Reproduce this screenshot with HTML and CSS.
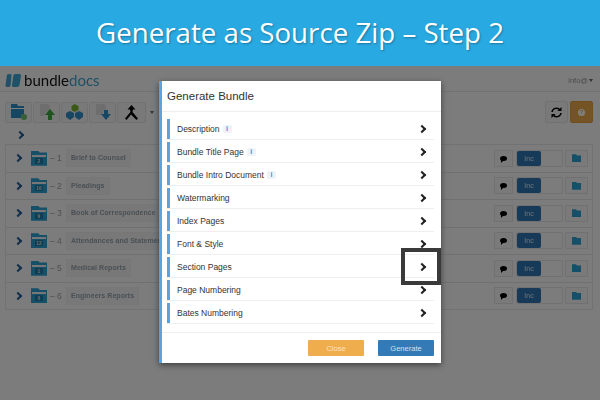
FILE: index.html
```html
<!DOCTYPE html>
<html lang="en">
<head>
    <meta charset="UTF-8">
    <title>Generate as Source Zip - Step 2</title>
    <link rel="stylesheet" href="styles.css">
</head>
<body>

    <!-- Banner -->
    <header class="banner">Generate as Source Zip – Step 2</header>

    <!-- App behind the modal -->
    <main class="app">
        <div class="topbar">
            <div class="logo">
                <svg class="logo-mark" width="16" height="13" viewBox="0 0 16 13"><path d="M2 .5Q3 0 5 0 6.500 0 6.500 1L5.500 11.500Q5 13 3 13 0 13 .5 11zM8.500 1Q9 0 11 0h3.500Q16 0 16 1.500L14.500 11Q14 13 12 13H8.500Q6.500 13 7 11z" fill="#3aa4d0"/></svg>
                <span>bundle</span><span class="logo-docs">docs</span>
            </div>
            <div class="user">info@<i class="caret"></i></div>
        </div>

        <div class="toolbar">
            <button class="tool">
                <svg width="16" height="16" viewBox="0 0 16 16"><path d="M0 0h6l1 2h6v8a4 4 0 0 0-3 4H0z" fill="#2a8fc4"/><path d="M0 4h13v1H0z" fill="#fff"/><circle cx="13" cy="13" r="3" fill="#6cbf6c"/></svg>
            </button>
            <button class="tool">
                <svg width="16" height="17" viewBox="0 0 16 17"><path d="M1 0h8l2 2v5H8l-3 5H1z" fill="#ddd"/><path d="M11 5l5 6h-3v5H9v-5H6z" fill="#3fa63f"/></svg>
            </button>
            <button class="tool">
                <svg width="17" height="16" viewBox="0 0 17 16"><path d="M8.500 0l4 2v4l-4 2-3-2V2z" fill="#76b032"/><path d="M4 7l4 2v4l-4 3-4-3V9z" fill="#2f8fc6"/><path d="M13 7l4 2v4l-4 3-4-3V9z" fill="#2f8fc6"/></svg>
            </button>
            <button class="tool">
                <svg width="16" height="17" viewBox="0 0 16 17"><path d="M1 0h8l2 2v5H8v4H1z" fill="#ddd"/><path d="M11 16L6 10h3V6h4v4h3z" fill="#2f8fc6"/></svg>
            </button>
            <button class="tool wide">
                <svg width="15" height="15" viewBox="0 0 15 15"><path d="M7.500 0l4 4.500H9L8.500 7l5.500 6.500-1.500 1.500L7 9.500 2.500 15 1 13.500 6.500 7 6 4.500H3.500z" fill="#000"/></svg>
            </button>
            <i class="caret tool-caret"></i>
            <div class="toolbar-right">
                <button class="tool square">
                    <svg width="11" height="11" viewBox="0 0 11 11"><path d="M1 5a4.500 4.500 0 0 1 8-2M10 6a4.500 4.500 0 0 1-8 2" fill="none" stroke="#000" stroke-width="1.500"/><path d="M10.500 0v4h-4zM.5 11V7h4z" fill="#000"/></svg>
                </button>
                <button class="tool square help"><span class="help-dot">?</span></button>
            </div>
        </div>

        <div class="root-arrow"><span class="chev chev-blue"></span></div>

        <section class="sections">
            <div class="section">
                <span class="chev chev-blue"></span>
                <span class="folder"><b>2</b></span>
                <span class="num">– 1</span>
                <span class="label">Brief to Counsel</span>
                <div class="actions">
                    <button class="act"><i class="bubble"></i></button>
                    <div class="toggle"><span class="inc">Inc</span></div>
                    <button class="act act-folder"><i class="mini-folder"></i></button>
                </div>
            </div>
            <div class="section">
                <span class="chev chev-blue"></span>
                <span class="folder"><b>16</b></span>
                <span class="num">– 2</span>
                <span class="label">Pleadings</span>
                <div class="actions">
                    <button class="act"><i class="bubble"></i></button>
                    <div class="toggle"><span class="inc">Inc</span></div>
                    <button class="act act-folder"><i class="mini-folder"></i></button>
                </div>
            </div>
            <div class="section">
                <span class="chev chev-blue"></span>
                <span class="folder"><b>9</b></span>
                <span class="num">– 3</span>
                <span class="label">Book of Correspondence</span>
                <div class="actions">
                    <button class="act"><i class="bubble"></i></button>
                    <div class="toggle"><span class="inc">Inc</span></div>
                    <button class="act act-folder"><i class="mini-folder"></i></button>
                </div>
            </div>
            <div class="section">
                <span class="chev chev-blue"></span>
                <span class="folder"><b>12</b></span>
                <span class="num">– 4</span>
                <span class="label">Attendances and Statements</span>
                <div class="actions">
                    <button class="act"><i class="bubble"></i></button>
                    <div class="toggle"><span class="inc">Inc</span></div>
                    <button class="act act-folder"><i class="mini-folder"></i></button>
                </div>
            </div>
            <div class="section">
                <span class="chev chev-blue"></span>
                <span class="folder"><b>1</b></span>
                <span class="num">– 5</span>
                <span class="label">Medical Reports</span>
                <div class="actions">
                    <button class="act"><i class="bubble"></i></button>
                    <div class="toggle"><span class="inc">Inc</span></div>
                    <button class="act act-folder"><i class="mini-folder"></i></button>
                </div>
            </div>
            <div class="section">
                <span class="chev chev-blue"></span>
                <span class="folder"><b>6</b></span>
                <span class="num">– 6</span>
                <span class="label">Engineers Reports</span>
                <div class="actions">
                    <button class="act"><i class="bubble"></i></button>
                    <div class="toggle"><span class="inc">Inc</span></div>
                    <button class="act act-folder"><i class="mini-folder"></i></button>
                </div>
            </div>
        </section>
    </main>

    <!-- Modal -->
    <div class="overlay"></div>
    <div class="modal">
        <h3 class="modal-title">Generate Bundle</h3>
        <div class="modal-body">
            <div class="option"><span>Description</span><i class="info">i</i><span class="chev"></span></div>
            <div class="option"><span>Bundle Title Page</span><i class="info">i</i><span class="chev"></span></div>
            <div class="option"><span>Bundle Intro Document</span><i class="info">i</i><span class="chev"></span></div>
            <div class="option"><span>Watermarking</span><span class="chev"></span></div>
            <div class="option"><span>Index Pages</span><span class="chev"></span></div>
            <div class="option"><span>Font &amp; Style</span><span class="chev"></span></div>
            <div class="option"><span>Section Pages</span><span class="chev"></span></div>
            <div class="option"><span>Page Numbering</span><span class="chev"></span></div>
            <div class="option"><span>Bates Numbering</span><span class="chev"></span></div>
        </div>
        <div class="modal-footer">
            <button class="btn btn-close">Close</button>
            <button class="btn btn-generate">Generate</button>
        </div>
    </div>

    <!-- Callout round the Section Pages arrow -->
    <div class="callout"></div>

</body>
</html>
```

FILE: styles.css
```css
/* Page */
body {
    font-family: 'Liberation Sans', Arial, sans-serif;
    margin: 0;
    width: 600px;
    height: 400px;
    position: relative;
    overflow: hidden;
    background: #fff;
}

/* Banner */
.banner {
    height: 66px;
    background: #29a9e1;
    color: #fff;
    font-family: 'Open Sans', sans-serif;
    font-size: 27.700px;
    line-height: 64px;
    text-align: center;
    text-shadow: 1px 1px 2px rgba(0, 0, 0, 0.3);
    position: relative;
    z-index: 3;
}

/* App behind the modal */
.app {
    padding: 0 7px 0 5px;
    height: 334px;
    background: #f8f8f8;
    filter: blur(0.4px);
}

.topbar {
    height: 22px;
    margin: 0 -7px 0 -5px;
    padding: 3px 7px 0 5px;
    display: flex;
    align-items: center;
    justify-content: space-between;
    border-bottom: 1px solid #e4e4e4;
}

.logo {
    display: flex;
    align-items: center;
    font-family: 'Lato', sans-serif;
    font-size: 15px;
    color: #111;
}

.logo-mark { margin-right: 3px; }
.logo-docs { color: #3aa4d0; }

.user {
    font-size: 7.500px;
    color: #999;
}

.caret {
    display: inline-block;
    margin-left: 1px;
    border-top: 3px solid #666;
    border-left: 2px solid transparent;
    border-right: 2px solid transparent;
    vertical-align: middle;
}

.toolbar {
    display: flex;
    align-items: center;
    margin-top: 9px;
    gap: 1px;
}

.tool {
    width: 27px;
    height: 21px;
    padding: 0;
    border: 1px solid #e2e2e2;
    border-radius: 2px;
    background: #f3f3f3;
    display: flex;
    align-items: center;
    justify-content: center;
}

.tool.wide { width: 29px; }
.tool-caret { margin-left: 3px; }

.toolbar-right {
    margin-left: auto;
    display: flex;
    gap: 2px;
}

.tool.square {
    width: 23px;
    height: 22px;
}

.tool.help {
    background: #e8a848;
    border-color: #e0a040;
}

.help-dot {
    width: 7px;
    height: 7px;
    border-radius: 50%;
    background: #fff;
    color: #e8a848;
    font-size: 6px;
    line-height: 7px;
    font-weight: bold;
}

.root-arrow {
    height: 19px;
    padding: 2px 0 0 12px;
    display: flex;
    align-items: center;
}

/* Section rows */
.sections { border: 1px solid #e4e4e4; }

.section {
    height: 26.500px;
    display: flex;
    align-items: center;
    padding-left: 9px;
    border-bottom: 1px solid #e0e0e0;
}

.section:last-child { border-bottom: none; }

.chev {
    width: 4px;
    height: 4px;
    border-top: 2px solid #222;
    border-right: 2px solid #222;
    transform: rotate(45deg);
    flex-shrink: 0;
}

.chev-blue { border-color: #235f95; }

.folder {
    margin-left: 10px;
    width: 16px;
    height: 15px;
    background: #2a9fd0;
    clip-path: polygon(0 0, 45% 0, 55% 12%, 100% 12%, 100% 100%, 0 100%);
    position: relative;
    display: flex;
    align-items: flex-end;
    justify-content: center;
}

.folder::before {
    content: "";
    position: absolute;
    left: 1px;
    right: 1px;
    top: 4px;
    height: 2px;
    background: #eee;
}

.folder b {
    font-size: 5px;
    line-height: 6px;
    width: 8px;
    text-align: center;
    color: #ddd;
    background: #1f7aa5;
    margin-bottom: 2px;
}

.num {
    margin-left: 3px;
    width: 15px;
    font-size: 8.500px;
    color: #a0a0a0;
}

.label {
    margin-left: 1px;
    padding: 0 4px;
    height: 16px;
    line-height: 16px;
    font-size: 7px;
    font-weight: bold;
    letter-spacing: 0.05px;
    color: #94a0aa;
    background: #f1f1f1;
    border: 1px solid #eee;
    white-space: nowrap;
}

.actions {
    margin-left: auto;
    display: flex;
    align-items: center;
    gap: 3px;
    padding-right: 4px;
}

.act {
    width: 19px;
    height: 17px;
    padding: 0;
    border: 1px solid #e2e2e2;
    background: #f5f5f5;
    display: flex;
    align-items: center;
    justify-content: center;
}

.act-folder {
    width: 23px;
    margin-left: -1px;
}

.toggle {
    width: 45px;
    height: 15px;
    border: 1px solid #e2e2e2;
    border-radius: 2px;
    background: #f8f8f8;
}

.inc {
    display: block;
    width: 24px;
    height: 15px;
    line-height: 15px;
    background: #2f75b0;
    border-radius: 2px;
    color: #cfe3f3;
    font-size: 7px;
    text-align: center;
}

.bubble {
    width: 7px;
    height: 5px;
    border-radius: 50%;
    background: #000;
    position: relative;
}

.bubble::after {
    content: "";
    position: absolute;
    left: 1px;
    bottom: -2px;
    border-top: 3px solid #000;
    border-right: 3px solid transparent;
}

.mini-folder {
    width: 9px;
    height: 8px;
    background: #2a9fd0;
    clip-path: polygon(0 0, 45% 0, 55% 15%, 100% 15%, 100% 100%, 0 100%);
}

/* Dim layer */
.overlay {
    position: absolute;
    left: 0;
    top: 66px;
    width: 600px;
    height: 334px;
    background: rgba(0, 0, 0, 0.5);
}

/* Modal */
.modal {
    position: absolute;
    left: 159px;
    top: 81px;
    width: 279px;
    height: 282px;
    background: #fff;
    border-left: 3px solid #5ba3e0;
    box-shadow: 0 2px 6px rgba(0, 0, 0, 0.5);
    display: flex;
    flex-direction: column;
}

.modal-title {
    margin: 0;
    height: 30px;
    padding-left: 5px;
    font-size: 11.500px;
    font-weight: normal;
    line-height: 30px;
    color: #333;
    border-bottom: 1px solid #eee;
}

.modal-body {
    flex: 1;
    padding: 7px 7px 0 5px;
}

.option {
    height: 20px;
    margin-bottom: 3px;
    padding: 0 9px 0 7px;
    display: flex;
    align-items: center;
    border-left: 3px solid #5ba3e0;
    box-shadow: 0 1px 0 #eee;
    font-size: 8.500px;
    color: #333;
}

.option .chev { margin-left: auto; }

.info {
    margin-left: 3px;
    width: 9px;
    height: 8px;
    line-height: 8px;
    text-align: center;
    background: #eef3f8;
    border-radius: 2px;
    color: #4a90d0;
    font-size: 7px;
    font-style: normal;
    font-weight: bold;
}

.modal-footer {
    height: 31px;
    padding: 7px 7px 0 0;
    box-sizing: border-box;
    border-top: 1px solid #eee;
    display: flex;
    justify-content: flex-end;
    gap: 14px;
}

.btn {
    width: 56px;
    height: 16px;
    padding: 0;
    border: 1px solid transparent;
    border-radius: 1px;
    font-family: inherit;
    font-size: 7.500px;
}

.btn-close {
    background: #f0ad4e;
    color: #fbe3c0;
}

.btn-generate {
    background: #337ab7;
    color: #cfe0f0;
}

/* Callout */
.callout {
    position: absolute;
    left: 401px;
    top: 248px;
    width: 32px;
    height: 29px;
    border: 4px solid #3a3a3a;
}
```
